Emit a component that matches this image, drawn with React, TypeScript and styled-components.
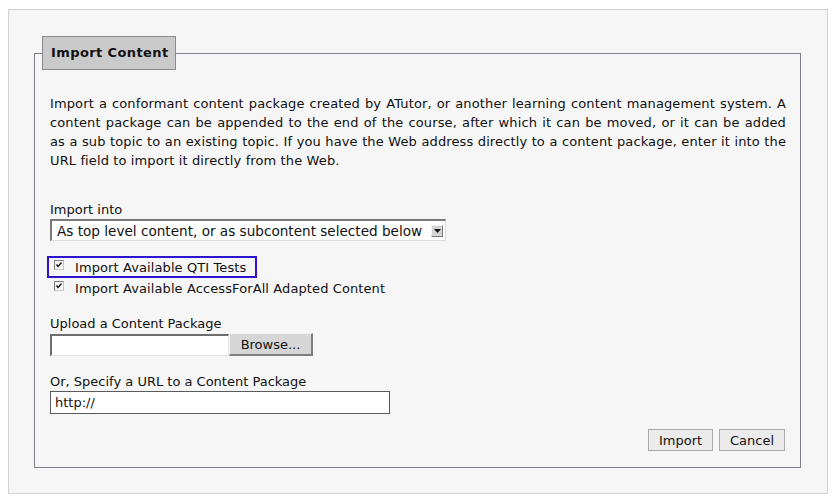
import styled, { createGlobalStyle } from "styled-components";

const GlobalStyle = createGlobalStyle`
  html, body {
    margin: 0;
    padding: 0;
    background: #ffffff;
  }
  body {
    font-family: "DejaVu Sans", Verdana, sans-serif;
    font-size: 13px;
    color: #111;
  }
`;

const CheckMark = () => (
  <svg width="10" height="10" viewBox="0 0 10 10">
    <rect x="0.5" y="0.5" width="9" height="9" fill="#f4f4f4" stroke="#c8c8c8" />
    <path d="M0.5 9.5 V0.5 H9.5" fill="none" stroke="#7e7e7e" />
    <path d="M2.5 4.5 L4 6.5 L7.5 2.5" fill="none" stroke="#111" strokeWidth="1.3" />
  </svg>
);

const App = () => {
  return (
    <>
      <GlobalStyle />
      <Panel>
        <Fieldset>
          <Legend>Import Content</Legend>
          <Body>
            <Intro>
              Import a conformant content package created by ATutor, or another
              learning content management system. A content package can be
              appended to the end of the course, after which it can be moved, or
              it can be added as a sub topic to an existing topic. If you have the
              Web address directly to a content package, enter it into the URL
              field to import it directly from the Web.
            </Intro>

            <Label>Import into</Label>
            <SelectBox>
              <SelectText>As top level content, or as subcontent selected below</SelectText>
              <ArrowButton>
                <svg width="7" height="4" viewBox="0 0 7 4">
                  <path d="M0 0 H7 L3.5 4 Z" fill="#111" />
                </svg>
              </ArrowButton>
            </SelectBox>

            <Checks>
              <CheckRow $focused>
                <CheckMark />
                <span>Import Available QTI Tests</span>
              </CheckRow>
              <CheckRow>
                <CheckMark />
                <span>Import Available AccessForAll Adapted Content</span>
              </CheckRow>
            </Checks>

            <Label>Upload a Content Package</Label>
            <FileRow>
              <TextBox $width={179} $height={22} />
              <BrowseButton>Browse...</BrowseButton>
            </FileRow>

            <Label $gap={16}>Or, Specify a URL to a Content Package</Label>
            <UrlBox>http://</UrlBox>

            <Actions>
              <ActionButton $width={65}>Import</ActionButton>
              <ActionButton $width={66}>Cancel</ActionButton>
            </Actions>
          </Body>
        </Fieldset>
      </Panel>
    </>
  );
};

export default App;

const Panel = styled.div`
  box-sizing: border-box;
  width: 820px;
  margin: 9px 0 0 8px;
  padding: 26px 0 25px 25px;
  background: #f6f6f7;
  border: 1px solid #d2d2d2;
`;

const Fieldset = styled.fieldset`
  box-sizing: border-box;
  width: 767px;
  margin: 0;
  padding: 0;
  border: 1px solid #7f7f8c;
  min-inline-size: 0;
`;

const Legend = styled.legend`
  box-sizing: border-box;
  height: 34px;
  margin-left: 7px;
  padding: 0 6px 0 8px;
  line-height: 32px;
  font-weight: bold;
  font-size: 13px;
  letter-spacing: 0.4px;
  color: #111;
  background: #cacaca;
  border: 1px solid #8a8a8a;
`;

const Body = styled.div`
  padding: 24px 14px 16px 15px;
  display: flex;
  flex-direction: column;
  align-items: flex-start;
`;

const Intro = styled.p`
  margin: 0 0 30px;
  line-height: 19px;
  text-align: justify;
  letter-spacing: 0.12px;
  align-self: stretch;
`;

const Label = styled.div<{ $gap?: number }>`
  line-height: 19px;
  margin-top: ${(p) => p.$gap ?? 0}px;
`;

const SelectBox = styled.div`
  box-sizing: border-box;
  display: flex;
  align-items: center;
  width: 396px;
  height: 22px;
  background: #fff;
  border-top: 2px solid #7a7a7a;
  border-left: 2px solid #7a7a7a;
  border-right: 1px solid #dcdcdc;
  border-bottom: 1px solid #dcdcdc;
`;

const SelectText = styled.span`
  flex: 1;
  padding-left: 5px;
  font-size: 13.6px;
  white-space: nowrap;
`;

const ArrowButton = styled.span`
  box-sizing: border-box;
  width: 12px;
  height: 12px;
  margin-right: 2px;
  display: flex;
  align-items: center;
  justify-content: center;
  background: #d4d4d4;
  border-top: 1px solid #f2f2f2;
  border-left: 1px solid #f2f2f2;
  border-right: 1px solid #7a7a7a;
  border-bottom: 1px solid #7a7a7a;
`;

const Checks = styled.div`
  display: flex;
  flex-direction: column;
  align-items: flex-start;
  margin: 15px 0 16px -3px;
`;

const CheckRow = styled.label<{ $focused?: boolean }>`
  box-sizing: border-box;
  display: inline-flex;
  align-items: center;
  gap: 11px;
  height: 22px;
  padding: 0 9px 0 5px;
  border: 2px solid ${(p) => (p.$focused ? "#2d14cf" : "transparent")};
  margin-bottom: -1px;
  line-height: 19px;
  letter-spacing: 0.1px;

  svg {
    margin-top: -4px;
  }
`;

const FileRow = styled.div`
  display: flex;
  align-items: center;
`;

const TextBox = styled.div<{ $width: number; $height: number }>`
  box-sizing: border-box;
  width: ${(p) => p.$width}px;
  height: ${(p) => p.$height}px;
  background: #fff;
  border-top: 2px solid #6e6e6e;
  border-left: 2px solid #6e6e6e;
  border-right: 1px solid #e6e6e6;
  border-bottom: 1px solid #e6e6e6;
`;

const BrowseButton = styled.button`
  box-sizing: border-box;
  width: 84px;
  height: 23px;
  padding: 0;
  font: inherit;
  color: #111;
  background: #d6d6d6;
  border-top: 1px solid #f4f4f4;
  border-left: 1px solid #f4f4f4;
  border-right: 2px solid #7e7e7e;
  border-bottom: 2px solid #7e7e7e;
`;

const UrlBox = styled.div`
  box-sizing: border-box;
  width: 340px;
  height: 23px;
  padding: 0 4px;
  line-height: 21px;
  background: #fff;
  border: 1px solid #5a5a5a;
`;

const Actions = styled.div`
  align-self: stretch;
  display: flex;
  justify-content: flex-end;
  gap: 6px;
  margin-top: 15px;
  padding-right: 1px;
`;

const ActionButton = styled.button<{ $width: number }>`
  box-sizing: border-box;
  width: ${(p) => p.$width}px;
  height: 22px;
  padding: 0;
  font: inherit;
  font-size: 13px;
  color: #111;
  background: #ebebeb;
  border: 1px solid #a9a9a9;
`;
